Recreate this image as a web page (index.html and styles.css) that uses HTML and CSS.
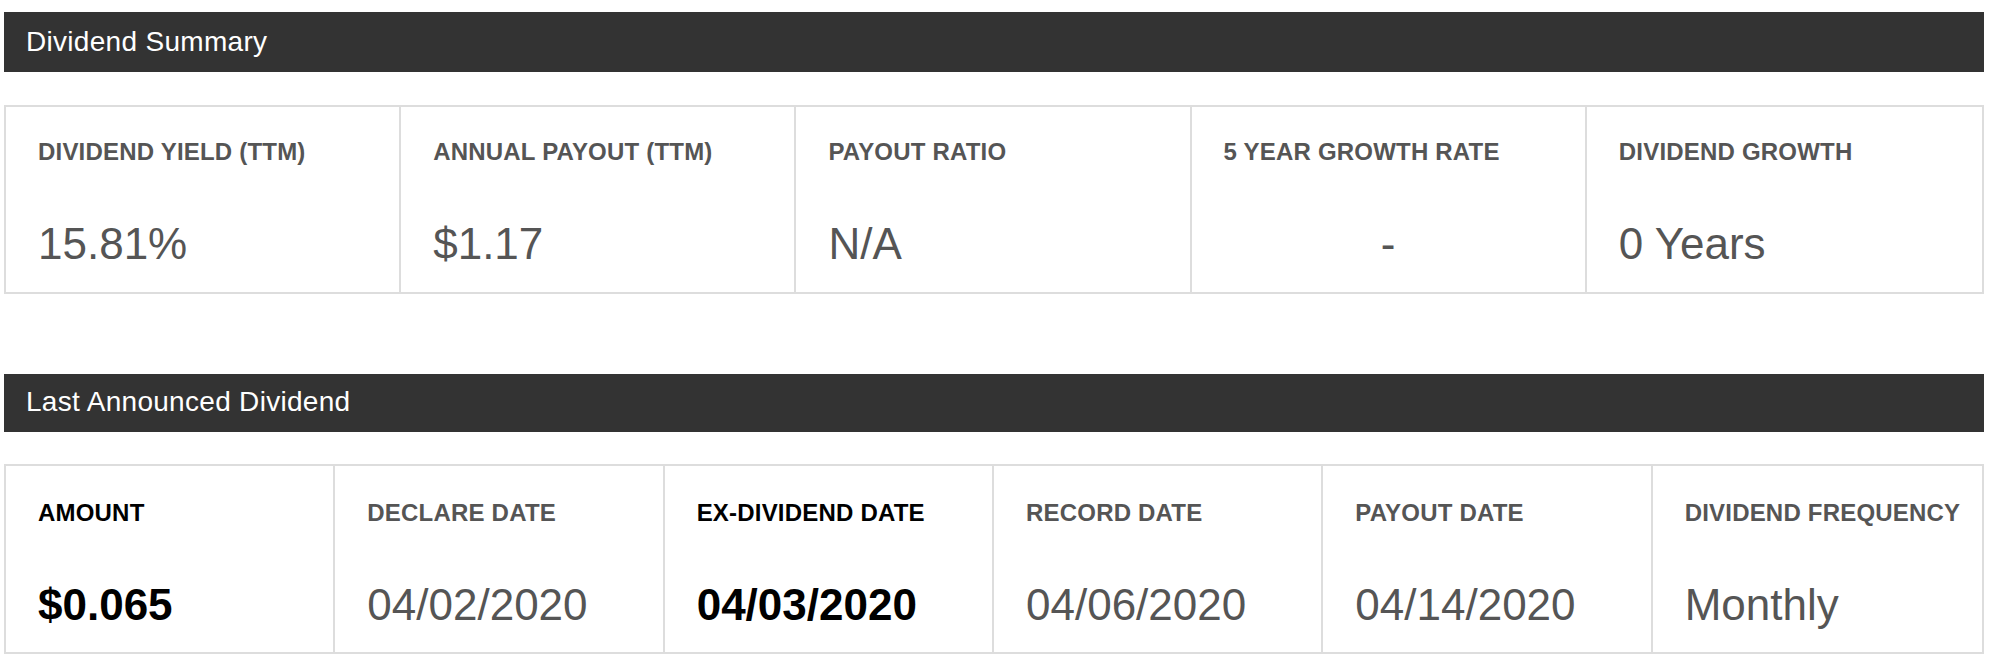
FILE: index.html
```html
<!DOCTYPE html>
<html lang="en">
<head>
<meta charset="utf-8">
<title>Dividend Summary</title>
<link rel="stylesheet" href="styles.css">
</head>
<body>
<main class="page">
  <section class="section">
    <h2 class="bar">Dividend Summary</h2>
    <div class="card card--five">
      <div class="cell">
        <div class="label">DIVIDEND YIELD (TTM)</div>
        <div class="value">15.81%</div>
      </div>
      <div class="cell">
        <div class="label">ANNUAL PAYOUT (TTM)</div>
        <div class="value">$1.17</div>
      </div>
      <div class="cell">
        <div class="label">PAYOUT RATIO</div>
        <div class="value">N/A</div>
      </div>
      <div class="cell">
        <div class="label">5 YEAR GROWTH RATE</div>
        <div class="value value--center">-</div>
      </div>
      <div class="cell">
        <div class="label">DIVIDEND GROWTH</div>
        <div class="value">0 Years</div>
      </div>
    </div>
  </section>

  <section class="section section--last">
    <h2 class="bar bar--tight">Last Announced Dividend</h2>
    <div class="card card--six">
      <div class="cell cell--hl">
        <div class="label">AMOUNT</div>
        <div class="value">$0.065</div>
      </div>
      <div class="cell">
        <div class="label">DECLARE DATE</div>
        <div class="value">04/02/2020</div>
      </div>
      <div class="cell cell--hl">
        <div class="label">EX-DIVIDEND DATE</div>
        <div class="value">04/03/2020</div>
      </div>
      <div class="cell">
        <div class="label">RECORD DATE</div>
        <div class="value">04/06/2020</div>
      </div>
      <div class="cell">
        <div class="label">PAYOUT DATE</div>
        <div class="value">04/14/2020</div>
      </div>
      <div class="cell">
        <div class="label">DIVIDEND FREQUENCY</div>
        <div class="value">Monthly</div>
      </div>
    </div>
  </section>
</main>
</body>
</html>
```

FILE: styles.css
```css
* {
  box-sizing: border-box;
}

html, body {
  margin: 0;
  padding: 0;
  background: #ffffff;
}

body {
  font-family: "Liberation Sans", Arial, sans-serif;
  color: #555555;
}

.page {
  margin: 12px 16px 0 4px;
  display: flex;
  flex-direction: column;
}

.section {
  display: flex;
  flex-direction: column;
}

.section--last {
  margin-top: 80px;
}

.bar {
  margin: 0 0 33px 0;
  height: 60px;
  line-height: 60px;
  padding: 0 0 0 22px;
  background: #333333;
  color: #ffffff;
  font-size: 28px;
  font-weight: normal;
  letter-spacing: 0.3px;
}

.bar--tight {
  height: 58px;
  line-height: 56px;
  margin-bottom: 32px;
}

.card {
  display: grid;
  border: 2px solid #dddddd;
}

.card--five {
  grid-template-columns: repeat(5, 1fr);
}

.card--six {
  grid-template-columns: repeat(6, 1fr);
}

.cell {
  display: flex;
  flex-direction: column;
  gap: 53px;
  padding: 31px 20px 23px 32px;
  border-right: 2px solid #dddddd;
  min-width: 0;
}

.cell:last-child {
  border-right: none;
}

.card--six .cell {
  padding-top: 33px;
  padding-bottom: 22px;
}

.label {
  font-size: 24px;
  line-height: 28px;
  font-weight: bold;
  color: #555555;
  white-space: nowrap;
  letter-spacing: 0.2px;
}

.value {
  font-size: 44px;
  line-height: 50px;
  color: #555555;
  white-space: nowrap;
}

.value--center {
  text-align: center;
  padding-right: 12px;
}

.cell--hl .label,
.cell--hl .value {
  color: #000000;
  font-weight: bold;
}
```
